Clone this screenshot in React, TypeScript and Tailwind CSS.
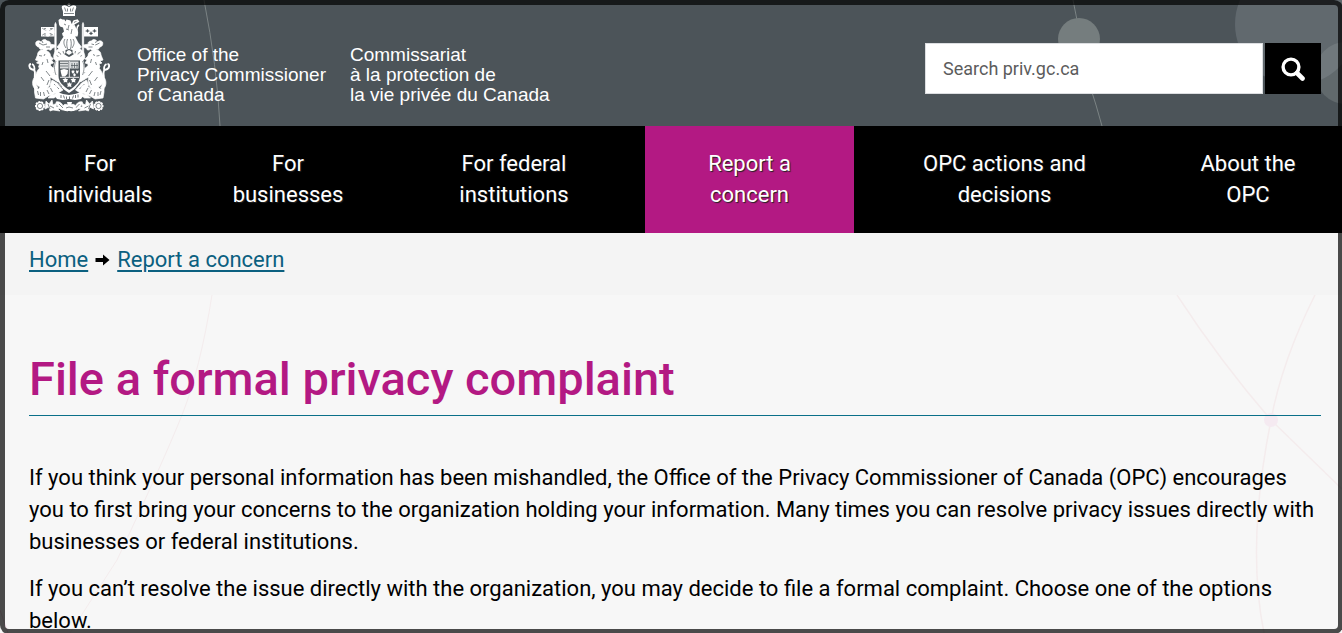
import React from 'react';
import { clsx } from 'clsx';

interface NavItem {
  label: string;
  active?: boolean;
}

const navItems: NavItem[] = [
  { label: 'For individuals' },
  { label: 'For businesses' },
  { label: 'For federal institutions' },
  { label: 'Report a concern', active: true },
  { label: 'OPC actions and decisions' },
  { label: 'About the OPC' },
];

// One side of the arms; the other side is the same drawing mirrored
const Supporter = () => (
  <g stroke="#fff" strokeWidth="0.7" strokeLinejoin="round">
    {/* mantling */}
    <path d="M36 42c2-2 4-1 5 0 1-2 4-4 6-1 3 0 4 2 3 3l5 1c1 2-1 3-3 3 0 2-2 3-4 1-1 2-4 3-5 0-2 1-4 0-4-2-2 0-4-2-3-5z" />
    <path d="M39 43l4 2 4-1M46 47l4 0M42 41l1 2" fill="none" stroke="#4c5459" />
    <path d="M56 51c3-3 6-3 8-1l5 2v5c-4 0-8 2-11 5l-4-3c-1-3 0-6 2-8z" />
    <path d="M58 52c1 1 3 1 3 3M63 51l1 4M56 55l3 2" fill="none" stroke="#4c5459" />
    <path d="M57 47l4-5 3 7-4 1z" />
    {/* lance */}
    <path d="M54.8 24.500l.7-2 .7 2v32h-1.400z" />
    {/* head and mane */}
    <path d="M37.500 55c0-3 2-5 5-5l2-1 1 2c3 0 5 2 5 5l3 3-2 1 2 3-3 1 0 3c-3 2-6 3-9 3l-3-3 1-3-3-1 2-2-3-1z" />
    <path d="M39 55.500l3 .5M45 54l-1 2M47 59l1 4M43 62l-1 3" fill="none" stroke="#4c5459" />
    {/* body and legs */}
    <path d="M41 67c4-2 10-2 12 1l6 1-1 3-5 0 6 6-1 4-8-5c1 5 0 9-3 12l-3 2-6 0 2-4c-5-2-7-8-4-13 1-3 3-6 5-7z" />
    <path d="M46 71l4 5M41 77l3 4M49 80l-2 5" fill="none" stroke="#4c5459" />
    <path d="M36 78c-1 3 0 7 2 10l-3 1c-3-3-3-8-1-11z" />
    <path d="M52 80l5 3 6 7-5 3-6-3-2-5z" />
    <path d="M54 84l5 5" fill="none" stroke="#4c5459" />
    {/* tail */}
    <path d="M37 82c-5-3 0-9-3-12-2-1-2 0-4-2-1-2-1-4 1-4M34 71c1-3 0-6-2-7" fill="none" strokeWidth="1.900" />
    {/* motto scroll */}
    <path d="M34.500 88l4 1 4-2 4 2 7-4 3 1 2 7-5 1-5 2-5 3-8-1-1-6z" />
    <path d="M37.500 91l1 4M40.500 92v4M43.500 92l1 4M47 90l2 4M50.500 88l2 4" fill="none" stroke="#4c5459" />
    <path d="M52 94l-4 4 6 0 4-3z" />
    {/* flowers */}
    <circle cx="40" cy="106" r="4.300" strokeDasharray="2 1" strokeWidth="1.400" />
    <circle cx="40" cy="106" r="2.600" fill="none" stroke="#4c5459" />
    <circle cx="40" cy="106" r="0.900" />
    <path d="M46 101l3 3 3-4 1 5 4-2-1 4 6 0-4 2 2 2-7-1-3 1-1-4-4 2z" />
    <path d="M50 106l4 2M48 104l2 5" stroke="#4c5459" />
    <path d="M56 102c3-1 6 1 7 4 1-2 3-2 5-1v6l-5-1c-3 0-6-4-7-8z" />
    <path d="M59 104l4 4" stroke="#4c5459" />
  </g>
);

const CoatOfArms = () => (
  <svg viewBox="28 3 82 110" className="h-[110px] w-[82px] shrink-0" fill="#fff" aria-hidden="true">
    {/* crown */}
    <path d="M68.300 3h1.400v1h1v1h-1v1h-1.400v-1h-1v-1h1z" />
    <path d="M62 6c3-2 5 0 7 1 2-1 4-3 7-1 1 2-1 4-1 6v4H63v-4c0-2-2-4-1-6z" />
    <path d="M64.500 7.500l1.500 4M73.500 7.500l-1.500 4M67.500 8.500v3M70.500 8.500v3M64 13.500h10" fill="none" stroke="#4c5459" strokeWidth="0.700" />
    {/* lion on the helm */}
    <path d="M58.500 20l2-1.500 2 1 2 0 1 2 1-2 4 1 1 3 2 2 3 3c2 2 2 5 1 8H63l-1-3 2-2-1-4-3-1-1-2z" />
    <path d="M64 24l2 1M66 29l3 1M69 25l-1 4M72 29l-1 5" fill="none" stroke="#4c5459" strokeWidth="0.700" />
    <path d="M75 33c4-2 0-6 4-8M75 28c0-3-4-4-1-7l4-1M72 25l7-4" fill="none" stroke="#fff" strokeWidth="1.500" />
    {/* helmet */}
    <path d="M64 36h11l3 6-2 7-4 3h-6l-4-3-2-7z" />
    <path d="M65 39c-2 3-1 6 1 9M67.500 39c-1 3-1 6 0 10M70.500 39c1 3 1 6 0 10M73 39c2 3 1 6-1 9" fill="none" stroke="#4c5459" strokeWidth="0.700" />
    {/* flags */}
    <path d="M41 27h13.500v9.500H41z" />
    <path d="M42.200 28.200l11 7M53.200 28.200l-11 7" stroke="#4c5459" strokeWidth="0.600" />
    <path d="M47.700 27v9.500M41 31.700h13.500" stroke="#fff" strokeWidth="2.400" />
    <path d="M44 28.500h2M50 28.500h2M44 35h2M50 35h2" stroke="#4c5459" strokeWidth="0.600" />
    <path d="M84 27h14v9.500H84z" />
    <path d="M87.500 29l.8 1.500 1.200.5-1.200.5-.8 1-.8-1-1.200-.5 1.200-.5zM94.500 29l.8 1.500 1.200.5-1.200.5-.8 1-.8-1-1.200-.5 1.200-.5zM91 31.500l.8 1.500 1.200.5-1.200.5-.8 1-.8-1-1.200-.5 1.200-.5z" fill="#4c5459" stroke="#4c5459" strokeWidth="0.300" />
    <Supporter />
    <g transform="matrix(-1 0 0 1 138.500 0)">
      <Supporter />
    </g>
    {/* unicorn horn */}
    <path d="M94 41l3 10-3 1z" />
    {/* garter and shield */}
    <path d="M60 55c5-3 14-3 19 0 5 4 7 11 5 18-2 9-8 16-15 20-7-4-13-11-15-20-2-7 1-14 6-18z" />
    <path d="M56 61c-2 4-2 9 0 14M82.500 61c2 4 2 9 0 14M58 82l4 5M80.500 82l-4 5" fill="none" stroke="#4c5459" strokeWidth="0.600" />
    <path d="M65.500 50l3.500-1 3.500 1 0 3 1.500 1-3 2-2 1-2-1-3-2 1.500-1z" fill="#4c5459" />
    <path d="M67 51l2-1 2 1 1 2-3 2-3-2z" />
    <path d="M58.500 60.500h21.500v15.500c0 6-5 10.500-10.700 14C63.500 86.500 58.500 82 58.500 76z" fill="#4c5459" />
    <path d="M60 61.500h8.500v7H60zM70 61.500h8.500v7H70z" fillOpacity="0.800" />
    <path d="M60 63.500h8M60 66h8M72 63v5M74.500 63v5M77 63v5M71 65.500h7" fill="none" stroke="#4c5459" strokeWidth="0.700" />
    <path d="M60.500 70l3.500-1 4 1-.5 4-2.500 2.500-3 0-1-3.500z" />
    <path d="M72 70l1 1 1-1 .5 2-1.500 2-1.500-2zM76.500 70l1 1 1-1v2l-1.500 2-1-2zM74.500 73l1.500 2-1.500 1.500-1.500-1.500z" />
    <path d="M69.300 61v16M60 77.300h19" fill="none" stroke="#fff" strokeWidth="0.900" />
    <path d="M65.500 78l1 1 1.500 0-1 2 .5 1.500-2-.5-2 .5.500-1.500-1.500-2h1.500zM73.500 78l1 1 1.500 0-1 2 .5 1.500-2-.5-2 .5.500-1.500-1.500-2h1.500zM69.300 82l1 1.500 1.700 0-1 1.500.5 2-2.200-.5-2 .5.500-2-1-1.500 1.500 0z" />
    {/* centre of the scroll and base */}
    <path d="M57 92l6 2 6 1 6-1 6-2 3 3-3 4-6 1-6-1-6 1-6-1-3-4z" />
    <path d="M61 95v3M63.500 95.500l1 3M66.500 96.500v2.500M69.500 96.500v2.500M72.500 98.500l1-3M75.500 95v3M78 94.500v3" fill="none" stroke="#4c5459" strokeWidth="0.800" />
    <path d="M67 102h5l-1 4h-3zM63 107l6-2 7 2-2 4H65z" />
    <path d="M66 108l3-1 4 1" fill="none" stroke="#4c5459" strokeWidth="0.700" />
  </svg>
);

const SearchIcon = () => (
  <svg viewBox="0 0 24 24" className="size-6" fill="none" stroke="#fff" aria-hidden="true">
    <circle cx="10" cy="10" r="7.900" strokeWidth="3.400" />
    <path d="M16 16l5.500 5.500" strokeWidth="4.600" strokeLinecap="round" />
  </svg>
);

const HeaderBackdrop = () => (
  <div className="absolute inset-0 overflow-hidden pointer-events-none">
    <svg viewBox="0 0 240 126" className="absolute left-0 top-0 h-[126px] w-60" fill="none">
      <path d="M204 0Q217 66 220 126" stroke="#7b8384" />
    </svg>
    <svg viewBox="0 0 342 126" className="absolute right-0 top-0 h-[126px] w-[342px]" fill="none">
      <path d="M73 0L77 20M90 86Q96 104 102 126" stroke="#7b8384" />
      <circle cx="79" cy="39" r="21" fill="#757d7e" />
      <circle cx="296" cy="24" r="61" fill="#a0a7b0" fillOpacity="0.25" />
      <circle cx="346" cy="73" r="31" fill="#9ea6a8" fillOpacity="0.25" />
    </svg>
  </div>
);

const PageBackdrop = () => (
  <div className="absolute inset-0 overflow-hidden pointer-events-none">
    <svg viewBox="0 0 240 338" className="absolute left-0 top-0 h-[338px] w-60" fill="none" stroke="#f4eced">
      <path d="M212 0Q200 75 182 120T117 265L70 338" />
      <path d="M0 315L8 338" stroke="#eed5e2" />
    </svg>
    <svg viewBox="0 0 182 338" className="absolute right-0 top-0 h-[338px] w-[182px]" fill="none" stroke="#f4eced" strokeWidth="1.500">
      <path d="M17 0Q60 66 111 125L182 194" />
      <path d="M155 0Q122 66 111 125Q86 250 104 338" />
      <circle cx="111" cy="125" r="7" fill="#f5eaf1" stroke="none" />
    </svg>
  </div>
);

const Header = () => (
  <header className="relative bg-[#4c5459]">
    <HeaderBackdrop />
    <div className="relative flex items-start justify-between pl-7 pr-[21px] pt-[3px] pb-[13px]">
      <a href="#" className="flex text-white font-['Liberation_Sans',sans-serif] text-[19px] leading-5">
        <CoatOfArms />
        <span className="ml-[27px] mt-[42px]">
          Office of the<br />Privacy Commissioner<br />of Canada
        </span>
        <span lang="fr" className="ml-6 mt-[42px]">
          Commissariat<br />à la protection de<br />la vie privée du Canada
        </span>
      </a>
      <form className="mt-10 flex gap-0.5" onSubmit={e => e.preventDefault()}>
        <input
          type="search"
          aria-label="Search priv.gc.ca"
          placeholder="Search priv.gc.ca"
          className="h-[51px] w-[338px] border border-[#dcdee1] bg-white px-[17px] text-lg text-black placeholder:text-[#5c5c5c]"
        />
        <button type="submit" aria-label="Search" className="flex h-[51px] w-14 items-center justify-center bg-black">
          <SearchIcon />
        </button>
      </form>
    </div>
  </header>
);

const MainNav = () => (
  <nav className="relative z-20 bg-black pl-[7px] pr-px">
    <ul className="grid grid-cols-[186fr_190fr_262fr_209fr_301fr_186fr]">
      {navItems.map(item => (
        <li key={item.label}>
          <a
            href="#"
            className={clsx(
              'block px-9 pt-[22px] pb-[23px] text-center text-[22px] leading-[31px] text-white [text-shadow:1px_1px_1px_#222]',
              item.active && 'bg-[#b31983]'
            )}
          >
            {item.label}
          </a>
        </li>
      ))}
    </ul>
  </nav>
);

const Breadcrumb = () => (
  <nav aria-label="Breadcrumb" className="bg-[#f4f4f4] px-[29px] pt-[11px] pb-[19px]">
    <ol className="flex items-center text-[22px] leading-8 text-[#0b6080]">
      <li>
        <a href="#" className="underline decoration-2 underline-offset-3">Home</a>
      </li>
      <li className="flex items-center">
        <svg viewBox="0 0 14 12" className="mx-[7px] h-3 w-[15px]" fill="#000" aria-hidden="true">
          <path d="M0 4h7.500V.5L14 6l-6.500 5.500V8H0z" />
        </svg>
        <a href="#" className="underline decoration-2 underline-offset-3">Report a concern</a>
      </li>
    </ol>
  </nav>
);

export default function App() {
  return (
    <div className="relative flex h-screen flex-col overflow-hidden bg-[#f7f7f7] font-[Roboto,sans-serif] text-black">
      <Header />
      <MainNav />
      <Breadcrumb />
      <main className="relative grow">
        <PageBackdrop />
        <div className="relative pl-[29px] pr-[21px] pt-12">
          <h1 className="border-b border-[#0a7089] pt-1.5 pb-1.5 text-[47px] leading-[60px] font-medium text-[#b31983]">
            File a formal privacy complaint
          </h1>
          <div className="mt-[46px] space-y-[15px] text-[22px] leading-8">
            <p>
              If you think your personal information has been mishandled, the Office of the Privacy Commissioner of
              Canada (OPC) encourages you to first bring your concerns to the organization holding your information.
              Many times you can resolve privacy issues directly with businesses or federal institutions.
            </p>
            <p>
              If you can’t resolve the issue directly with the organization, you may decide to file a formal
              complaint. Choose one of the options below.
            </p>
          </div>
        </div>
      </main>
      {/* Dimmed edge around the page */}
      <div className="pointer-events-none absolute top-[5px] right-1 bottom-1 left-[5px] z-10 rounded shadow-[0_0_0_5px_rgba(0,0,0,0.7)]" />
    </div>
  );
}
